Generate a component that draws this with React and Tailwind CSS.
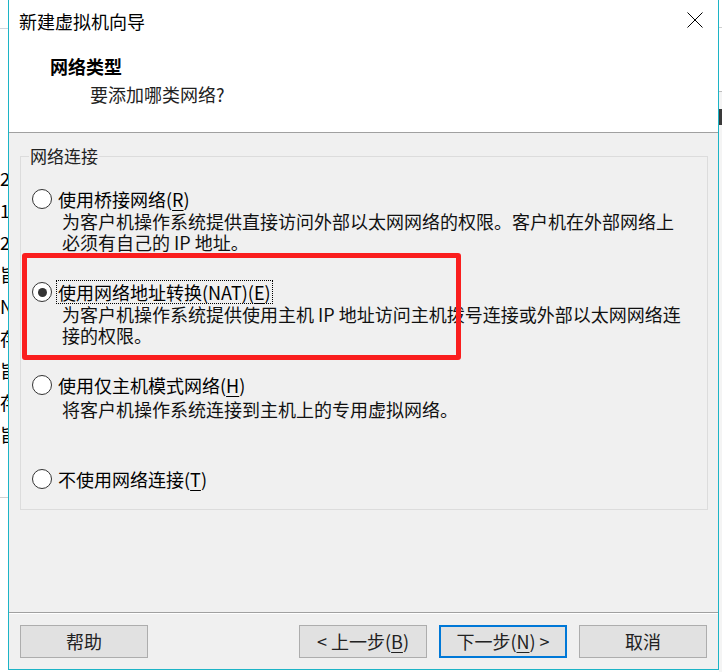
const Radio = ({ checked }) => (
  <span className="w-[20px] h-[20px] rounded-full border border-[#333] bg-white flex items-center justify-center shrink-0">
    {checked && <span className="w-[9px] h-[9px] rounded-full bg-[#333]" />}
  </span>
)

const Key = ({ children }) => (
  <span className="underline underline-offset-[3px] decoration-1">{children}</span>
)

const Option = ({ checked, label, hotkey, lines = [], className = '', descClass = '' }) => (
  <div className={className}>
    <div className="flex items-center h-[24px] pl-[11px]">
      <Radio checked={checked} />
      <span
        className={`ml-[4px] px-[1px] leading-[22px] border whitespace-nowrap ${
          checked ? 'border-dotted border-black' : 'border-transparent'
        }`}
      >
        {label}(<Key>{hotkey}</Key>)
      </span>
    </div>
    {lines.length > 0 && (
      <div className={`pl-[41px] leading-[21px] text-[#111] ${descClass}`}>
        {lines.map((line) => (
          <div key={line} className="whitespace-nowrap">{line}</div>
        ))}
      </div>
    )}
  </div>
)

const Button = ({ children, primary }) => (
  <button
    className={`w-[128px] h-[33px] bg-[#e1e1e1] text-[18px] text-[#222] flex items-center justify-center ${
      primary ? 'border-2 border-[#0078d7]' : 'border border-[#adadad]'
    }`}
  >
    {children}
  </button>
)

const App = () => {
  const bgChars = ['2', '1', '2(', '旨', 'N', '存', '旨', '存', '旨']

  return (
    <div className="relative flex w-[722px] h-[672px] overflow-hidden bg-white text-[18px] text-black font-['Noto_Sans_CJK_SC',sans-serif]">
      {/* background window, left */}
      <div className="w-[8px] shrink-0 overflow-hidden bg-white">
        <div className="h-[29px] border-b border-[#cdd5de]" />
        <div className="h-[133px]" />
        {bgChars.map((c, i) => (
          <div key={i} className="h-[32px] leading-[32px] whitespace-nowrap">{c}</div>
        ))}
        <div className="h-[48px] border-b border-[#d0d0d0]" />
      </div>

      {/* dialog */}
      <div className="w-[711px] h-[670px] shrink-0 flex flex-col border-l border-r border-b border-[#1cb4c6] bg-[#f0f0f0]">
        {/* header */}
        <div className="h-[133px] bg-white border-b border-[#a0a0a0] shrink-0">
          <div className="flex items-center justify-between h-[42px] pl-[10px] pr-[15px]">
            <span>新建虚拟机向导</span>
            <svg width="16" height="16" viewBox="0 0 16 16" className="mt-[-2px]">
              <path d="M0.5 0.5 L15.5 15.5 M15.5 0.5 L0.5 15.5" stroke="#000" strokeWidth="1" fill="none" />
            </svg>
          </div>
          <div className="mt-[12px] pl-[41px] leading-[24px] font-bold">网络类型</div>
          <div className="mt-[4px] pl-[81px] leading-[24px] text-[#222]">要添加哪类网络?</div>
        </div>

        {/* body */}
        <div className="flex-1 pt-[23px] pl-[11px]">
          <div className="relative w-[688px] h-[354px] border border-[#dcdcdc] pt-[30px]">
            <span className="absolute left-[8px] -top-[11px] px-[1px] bg-[#f0f0f0] leading-[20px] text-[17px] text-[#222]">
              网络连接
            </span>

            <Option
              label="使用桥接网络"
              hotkey="R"
              lines={[
                '为客户机操作系统提供直接访问外部以太网网络的权限。客户机在外部网络上',
                '必须有自己的 IP 地址。',
              ]}
            />
            <Option
              checked
              className="mt-[27px]"
              label="使用网络地址转换(NAT)"
              hotkey="E"
              lines={[
                '为客户机操作系统提供使用主机 IP 地址访问主机拨号连接或外部以太网网络连',
                '接的权限。',
              ]}
            />
            <Option
              className="mt-[27px]"
              descClass="mt-[2px]"
              label="使用仅主机模式网络"
              hotkey="H"
              lines={['将客户机操作系统连接到主机上的专用虚拟网络。']}
            />
            <Option className="mt-[47px]" label="不使用网络连接" hotkey="T" />
          </div>
        </div>

        {/* footer */}
        <div className="h-[57px] shrink-0 border-t border-[#a0a0a0] shadow-[inset_0_1px_0_#ffffff] flex items-start pt-[12px] px-[11px]">
          <Button>帮助</Button>
          <div className="flex-1" />
          <div className="flex gap-[12px]">
            <Button>&lt; 上一步(<Key>B</Key>)</Button>
            <Button primary>下一步(<Key>N</Key>) &gt;</Button>
            <Button>取消</Button>
          </div>
        </div>
      </div>

      {/* background window, right */}
      <div className="flex-1 bg-[#f4f4f4] flex flex-col">
        <div className="h-[28px] bg-white border-b border-[#cfcfcf]" />
        <div className="h-[64px] bg-white border-b border-[#bdbdbd]" />
        <div className="h-[17px]" />
        <div className="h-[16px] bg-[#3a3a3a]" />
      </div>

      {/* red annotation */}
      <div className="absolute left-[22px] top-[253px] w-[439px] h-[107px] border-[5px] border-[#fa1e1e] rounded-[3px] pointer-events-none" />
    </div>
  )
}

export default App
